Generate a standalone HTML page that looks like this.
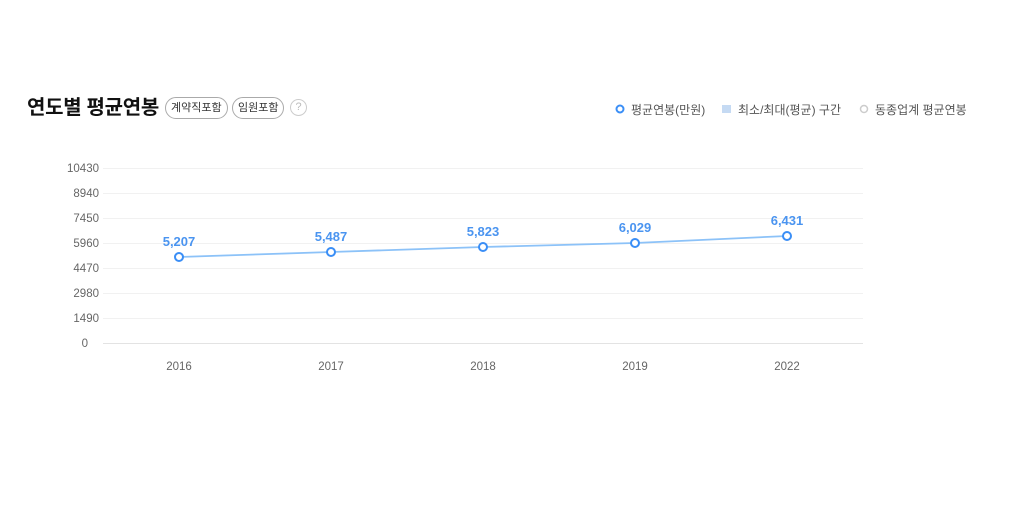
<!DOCTYPE html>
<html><head><meta charset="utf-8"><style>
body{margin:0;width:1024px;height:509px;background:#fff;font-family:"Liberation Sans","Noto Sans CJK KR",sans-serif;position:relative;overflow:hidden}
.t{position:absolute;left:27px;top:91px;font-size:20px;font-weight:bold;color:#111;letter-spacing:-0.3px}
.tag{position:absolute;top:97px;border:1px solid #aaa;border-radius:11px;font-size:11px;color:#333;line-height:20px;padding:0 5px;box-sizing:border-box;height:22px}
.q{position:absolute;left:290px;top:99px;width:17px;height:17px;border:1px solid #ccc;border-radius:50%;box-sizing:border-box;font-size:11px;color:#bbb;text-align:center;line-height:15px}
.lg{position:absolute;top:101px;font-size:12px;color:#555}
</style></head><body>
<div class="t">연도별 평균연봉</div>
<div class="tag" style="left:165px">계약직포함</div>
<div class="tag" style="left:232px">임원포함</div>
<div class="q">?</div>
<svg style="position:absolute;left:0;top:0" width="1024" height="509">
<circle cx="620" cy="109" r="3.5" fill="none" stroke="#3a8ef6" stroke-width="2"/>
<rect x="722" y="105" width="9" height="8" fill="#c5daf3"/>
<circle cx="864" cy="109" r="3.5" fill="none" stroke="#ccc" stroke-width="1.5"/>
<g stroke="#f1f1f1" stroke-width="1">
<line x1="103" y1="168.5" x2="863" y2="168.5"/><line x1="103" y1="193.5" x2="863" y2="193.5"/><line x1="103" y1="218.5" x2="863" y2="218.5"/><line x1="103" y1="243.5" x2="863" y2="243.5"/><line x1="103" y1="268.5" x2="863" y2="268.5"/><line x1="103" y1="293.5" x2="863" y2="293.5"/><line x1="103" y1="318.5" x2="863" y2="318.5"/>
</g>
<line x1="103" y1="343.5" x2="863" y2="343.5" stroke="#e3e3e3"/>
<g font-size="11.5" fill="#666" text-anchor="end" font-family="Liberation Sans,sans-serif">
<text x="99" y="172">10430</text><text x="99" y="197">8940</text><text x="99" y="222">7450</text><text x="99" y="247">5960</text><text x="99" y="272">4470</text><text x="99" y="297">2980</text><text x="99" y="322">1490</text><text x="88" y="347">0</text>
</g>
<g font-size="11.5" fill="#666" text-anchor="middle">
<text x="179" y="370">2016</text><text x="331" y="370">2017</text><text x="483" y="370">2018</text><text x="635" y="370">2019</text><text x="787" y="370">2022</text>
</g>
<polyline points="179,257 331,252 483,247 635,243 787,236" fill="none" stroke="#8cc2f8" stroke-width="1.8"/>
<g fill="#fff" stroke="#3a8ef6" stroke-width="2">
<circle cx="179" cy="257" r="4"/><circle cx="331" cy="252" r="4"/><circle cx="483" cy="247" r="4"/><circle cx="635" cy="243" r="4"/><circle cx="787" cy="236" r="4"/>
</g>
<g font-size="13" font-weight="bold" fill="#4a94f0" text-anchor="middle">
<text x="179" y="246">5,207</text><text x="331" y="241">5,487</text><text x="483" y="236">5,823</text><text x="635" y="232">6,029</text><text x="787" y="225">6,431</text>
</g>
</svg>
<div class="lg" style="left:631px">평균연봉(만원)</div>
<div class="lg" style="left:738px">최소/최대(평균) 구간</div>
<div class="lg" style="left:875px">동종업계 평균연봉</div>
</body></html>
